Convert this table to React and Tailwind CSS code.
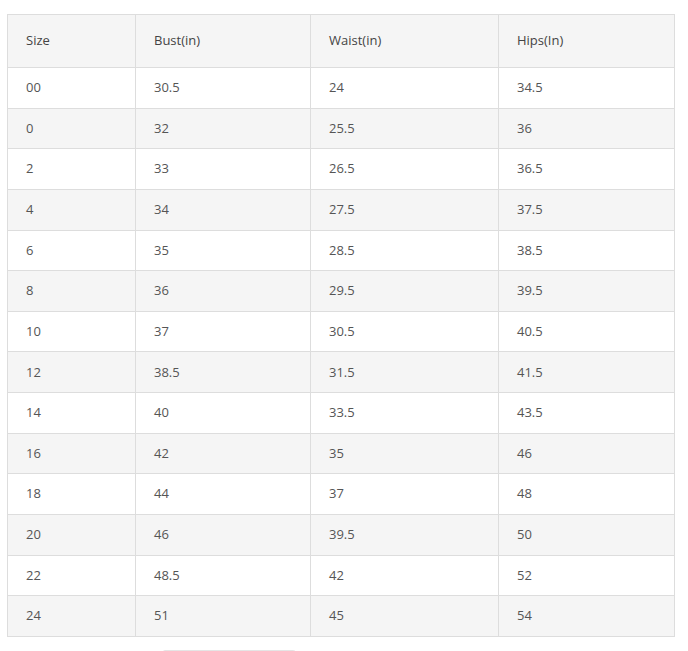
const rows = [
  ['00', '30.5', '24', '34.5'],
  ['0', '32', '25.5', '36'],
  ['2', '33', '26.5', '36.5'],
  ['4', '34', '27.5', '37.5'],
  ['6', '35', '28.5', '38.5'],
  ['8', '36', '29.5', '39.5'],
  ['10', '37', '30.5', '40.5'],
  ['12', '38.5', '31.5', '41.5'],
  ['14', '40', '33.5', '43.5'],
  ['16', '42', '35', '46'],
  ['18', '44', '37', '48'],
  ['20', '46', '39.5', '50'],
  ['22', '48.5', '42', '52'],
  ['24', '51', '45', '54'],
];

export default function App() {
  return (
    <div className="min-h-[651px] bg-white pt-[14px] pl-[7px] font-['Open_Sans',sans-serif] text-[13px] text-[#555]">
      <table className="w-[667px] border-collapse table-fixed">
        <colgroup>
          <col className="w-[128px]" />
          <col className="w-[175px]" />
          <col className="w-[188px]" />
          <col className="w-[176px]" />
        </colgroup>
        <thead>
          <tr className="h-[53px] bg-[#f5f5f5] text-[#444]">
            {['Size', 'Bust(in)', 'Waist(in)', 'Hips(In)'].map((h) => (
              <th key={h} className="border border-[#ddd] pl-[18px] text-left font-normal">
                {h}
              </th>
            ))}
          </tr>
        </thead>
        <tbody>
          {rows.map((r, i) => (
            <tr key={r[0]} className={`h-[40.65px] ${i % 2 === 1 ? 'bg-[#f5f5f5]' : 'bg-white'}`}>
              {r.map((c, j) => (
                <td key={j} className="border border-[#ddd] pl-[18px]">
                  {c}
                </td>
              ))}
            </tr>
          ))}
        </tbody>
      </table>
      <div className="ml-[156px] mt-[13px] h-[2px] w-[132px] rounded-t border-t border-x border-[#e5e5e5]" />
    </div>
  );
}
